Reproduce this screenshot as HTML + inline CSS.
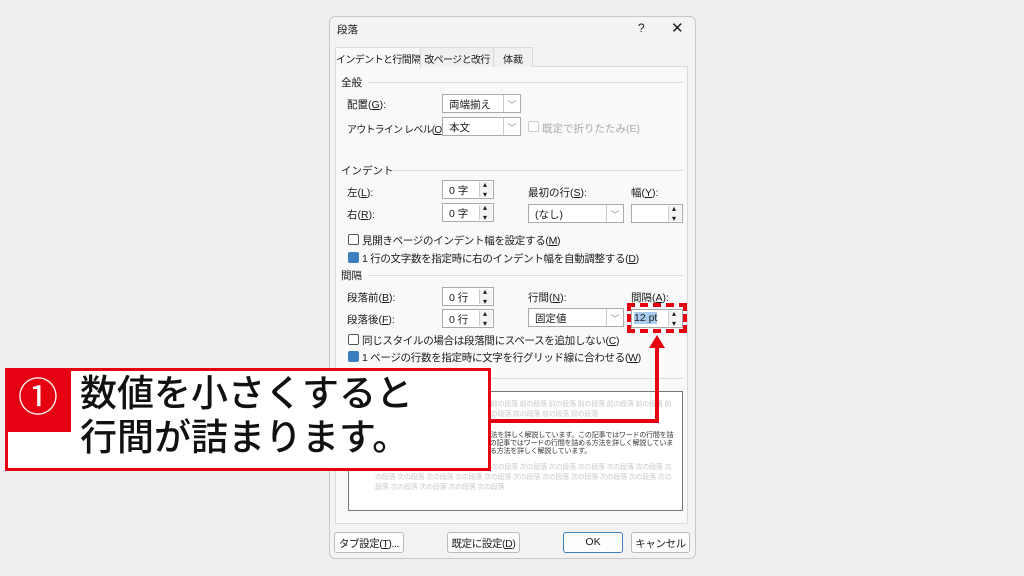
<!DOCTYPE html>
<html><head><meta charset="utf-8"><style>
*{margin:0;padding:0;box-sizing:border-box}
body{width:1024px;height:576px;background:#efefef;position:relative;overflow:hidden;font-family:"Liberation Sans","Noto Sans CJK JP",sans-serif;font-size:10.5px;color:#1a1a1a}
.a{position:absolute;white-space:nowrap}
.dlg{position:absolute;left:329px;top:16px;width:367px;height:543px;background:#f3f3f3;border:1px solid #c8c8c8;border-radius:6px}
.panel{position:absolute;left:335px;top:66px;width:353px;height:458px;background:#f9f9f9;border:1px solid #d9d9d9}
.tab{position:absolute;top:47px;height:20px;border:1px solid #d9d9d9;border-bottom:none;background:#f0f0f0;padding:3px 0 0;white-space:nowrap;text-align:center;font-size:10px}
.box{position:absolute;background:#fff;border:1px solid #aaa;padding:2px 6px;white-space:nowrap}
.sp{position:absolute;width:13px;border-left:1px solid #ccc;right:1px;top:1px;bottom:1px;background:#f3f3f3}
.sp:before{content:"▴";position:absolute;top:-2px;left:3px;font-size:8px}
.sp:after{content:"▾";position:absolute;bottom:-2px;left:3px;font-size:8px}
.dd{position:absolute;right:0;top:0;bottom:0;width:17px;border-left:1px solid #ccc;color:#888;text-align:center;font-size:9px;padding-top:3px}
.hr{position:absolute;height:1px;background:#ddd}
.cb{position:absolute;width:11px;height:11px;border:1px solid #555;border-radius:2px;background:#fff}
.cbk{background:#3c7fc1;border-color:#3c7fc1}
.btn{position:absolute;top:532px;height:21px;border:1px solid #bbb;border-radius:3px;background:#fdfdfd;text-align:center;padding-top:3px;white-space:nowrap}
.pv{position:absolute;font-size:7px;color:#c8c8c8;line-height:10px;white-space:normal;letter-spacing:-0.2px}
</style></head><body>
<div class="dlg"></div>
<div class="a" style="left:337px;top:22px">段落</div>
<div class="a" style="left:638px;top:21px;font-size:12px">?</div>
<div class="a" style="left:671px;top:19px;font-size:15px">✕</div>
<div class="panel"></div>
<div class="tab" style="left:335px;width:86px;background:#f9f9f9;height:21px;letter-spacing:-0.6px">インデントと行間隔</div>
<div class="tab" style="left:420px;width:74px;letter-spacing:-0.6px">改ページと改行</div>
<div class="tab" style="left:493px;width:40px">体裁</div>

<div class="a" style="left:341px;top:75px">全般</div><div class="hr" style="left:368px;top:82px;width:315px"></div>
<div class="a" style="left:347px;top:97px">配置(<u>G</u>):</div>
<div class="box" style="left:442px;top:94px;width:79px;height:19px">両端揃え<div class="dd">﹀</div></div>
<div class="a" style="left:347px;top:121px;letter-spacing:-0.8px;font-size:10px">アウトライン レベル(<u>O</u>):</div>
<div class="box" style="left:442px;top:117px;width:79px;height:19px">本文<div class="dd">﹀</div></div>
<div class="cb" style="left:528px;top:121px;border-color:#ccc"></div>
<div class="a" style="left:542px;top:121px;color:#aaa">既定で折りたたみ(E)</div>

<div class="a" style="left:341px;top:163px">インデント</div><div class="hr" style="left:392px;top:170px;width:291px"></div>
<div class="a" style="left:347px;top:185px">左(<u>L</u>):</div>
<div class="box" style="left:442px;top:180px;width:52px;height:19px">0 字<div class="sp"></div></div>
<div class="a" style="left:528px;top:185px">最初の行(<u>S</u>):</div>
<div class="a" style="left:631px;top:185px">幅(<u>Y</u>):</div>
<div class="a" style="left:347px;top:207px">右(<u>R</u>):</div>
<div class="box" style="left:442px;top:203px;width:52px;height:19px">0 字<div class="sp"></div></div>
<div class="box" style="left:528px;top:204px;width:96px;height:19px">(なし)<div class="dd">﹀</div></div>
<div class="box" style="left:631px;top:204px;width:52px;height:19px"><div class="sp"></div></div>
<div class="cb" style="left:348px;top:234px"></div>
<div class="a" style="left:362px;top:233px;letter-spacing:-0.3px">見開きページのインデント幅を設定する(<u>M</u>)</div>
<div class="cb cbk" style="left:348px;top:252px"></div>
<div class="a" style="left:362px;top:251px;letter-spacing:-0.3px">1 行の文字数を指定時に右のインデント幅を自動調整する(<u>D</u>)</div>

<div class="a" style="left:341px;top:268px">間隔</div><div class="hr" style="left:368px;top:275px;width:315px"></div>
<div class="a" style="left:347px;top:290px">段落前(<u>B</u>):</div>
<div class="box" style="left:442px;top:287px;width:52px;height:19px">0 行<div class="sp"></div></div>
<div class="a" style="left:528px;top:290px">行間(<u>N</u>):</div>
<div class="a" style="left:631px;top:290px">間隔(<u>A</u>):</div>
<div class="a" style="left:347px;top:312px">段落後(<u>F</u>):</div>
<div class="box" style="left:442px;top:309px;width:52px;height:19px">0 行<div class="sp"></div></div>
<div class="box" style="left:528px;top:308px;width:96px;height:19px">固定値<div class="dd">﹀</div></div>
<div class="box" style="left:631px;top:309px;width:52px;height:19px;padding-left:2px"><span style="background:#a9cdf0">12 pt</span><div class="sp"></div></div>
<div class="a" style="left:627px;top:303px;width:60px;height:30px;border:4px dashed #e60012"></div>
<div class="cb" style="left:348px;top:334px"></div>
<div class="a" style="left:362px;top:333px;letter-spacing:-0.3px">同じスタイルの場合は段落間にスペースを追加しない(<u>C</u>)</div>
<div class="cb cbk" style="left:348px;top:351px"></div>
<div class="a" style="left:362px;top:350px;letter-spacing:-0.3px">1 ページの行数を指定時に文字を行グリッド線に合わせる(<u>W</u>)</div>
<div class="hr" style="left:368px;top:378px;width:315px"></div>

<div class="a" style="left:348px;top:391px;width:335px;height:120px;background:#fff;border:1px solid #777"></div>
<div class="pv" style="left:375px;top:400px;width:300px">前の段落 前の段落 前の段落 前の段落 前の段落 前の段落 前の段落 前の段落 前の段落 前の段落 前の段落 前の段落 前の段落 前の段落 前の段落 前の段落 前の段落 前の段落</div>
<div class="pv" style="left:375px;top:432px;width:300px;color:#333;line-height:8px">この記事ではワードの行間を詰める方法を詳しく解説しています。この記事ではワードの行間を詰める方法を詳しく解説しています。この記事ではワードの行間を詰める方法を詳しく解説しています。この記事ではワードの行間を詰める方法を詳しく解説しています。</div>
<div class="pv" style="left:375px;top:463px;width:300px">次の段落 次の段落 次の段落 次の段落 次の段落 次の段落 次の段落 次の段落 次の段落 次の段落 次の段落 次の段落 次の段落 次の段落 次の段落 次の段落 次の段落 次の段落 次の段落 次の段落 次の段落 次の段落 次の段落 次の段落 次の段落</div>

<div class="btn" style="left:334px;width:70px;letter-spacing:-0.4px">タブ設定(<u>T</u>)...</div>
<div class="btn" style="left:447px;width:73px;letter-spacing:-0.4px">既定に設定(<u>D</u>)</div>
<div class="btn" style="left:563px;width:60px;border:1px solid #3c7fc1">OK</div>
<div class="btn" style="left:631px;width:59px;letter-spacing:-0.4px">キャンセル</div>

<svg class="a" style="left:0;top:0" width="1024" height="576">
<polyline points="488,421 657,421 657,345" fill="none" stroke="#e60012" stroke-width="4"/>
<polygon points="649,348 665,348 657,335" fill="#e60012"/>
</svg>
<div class="a" style="left:5px;top:368px;width:486px;height:103px;background:#fff;border:3px solid #e60012"></div>
<div class="a" style="left:5px;top:368px;width:66px;height:64px;background:#e60012;color:#fff;font-size:40px;text-align:center;line-height:60px">①</div>
<div class="a" style="left:80px;top:372px;font-size:37px;font-weight:500;line-height:44px;color:#111">数値を小さくすると<br>行間が詰まります。</div>
</body></html>
